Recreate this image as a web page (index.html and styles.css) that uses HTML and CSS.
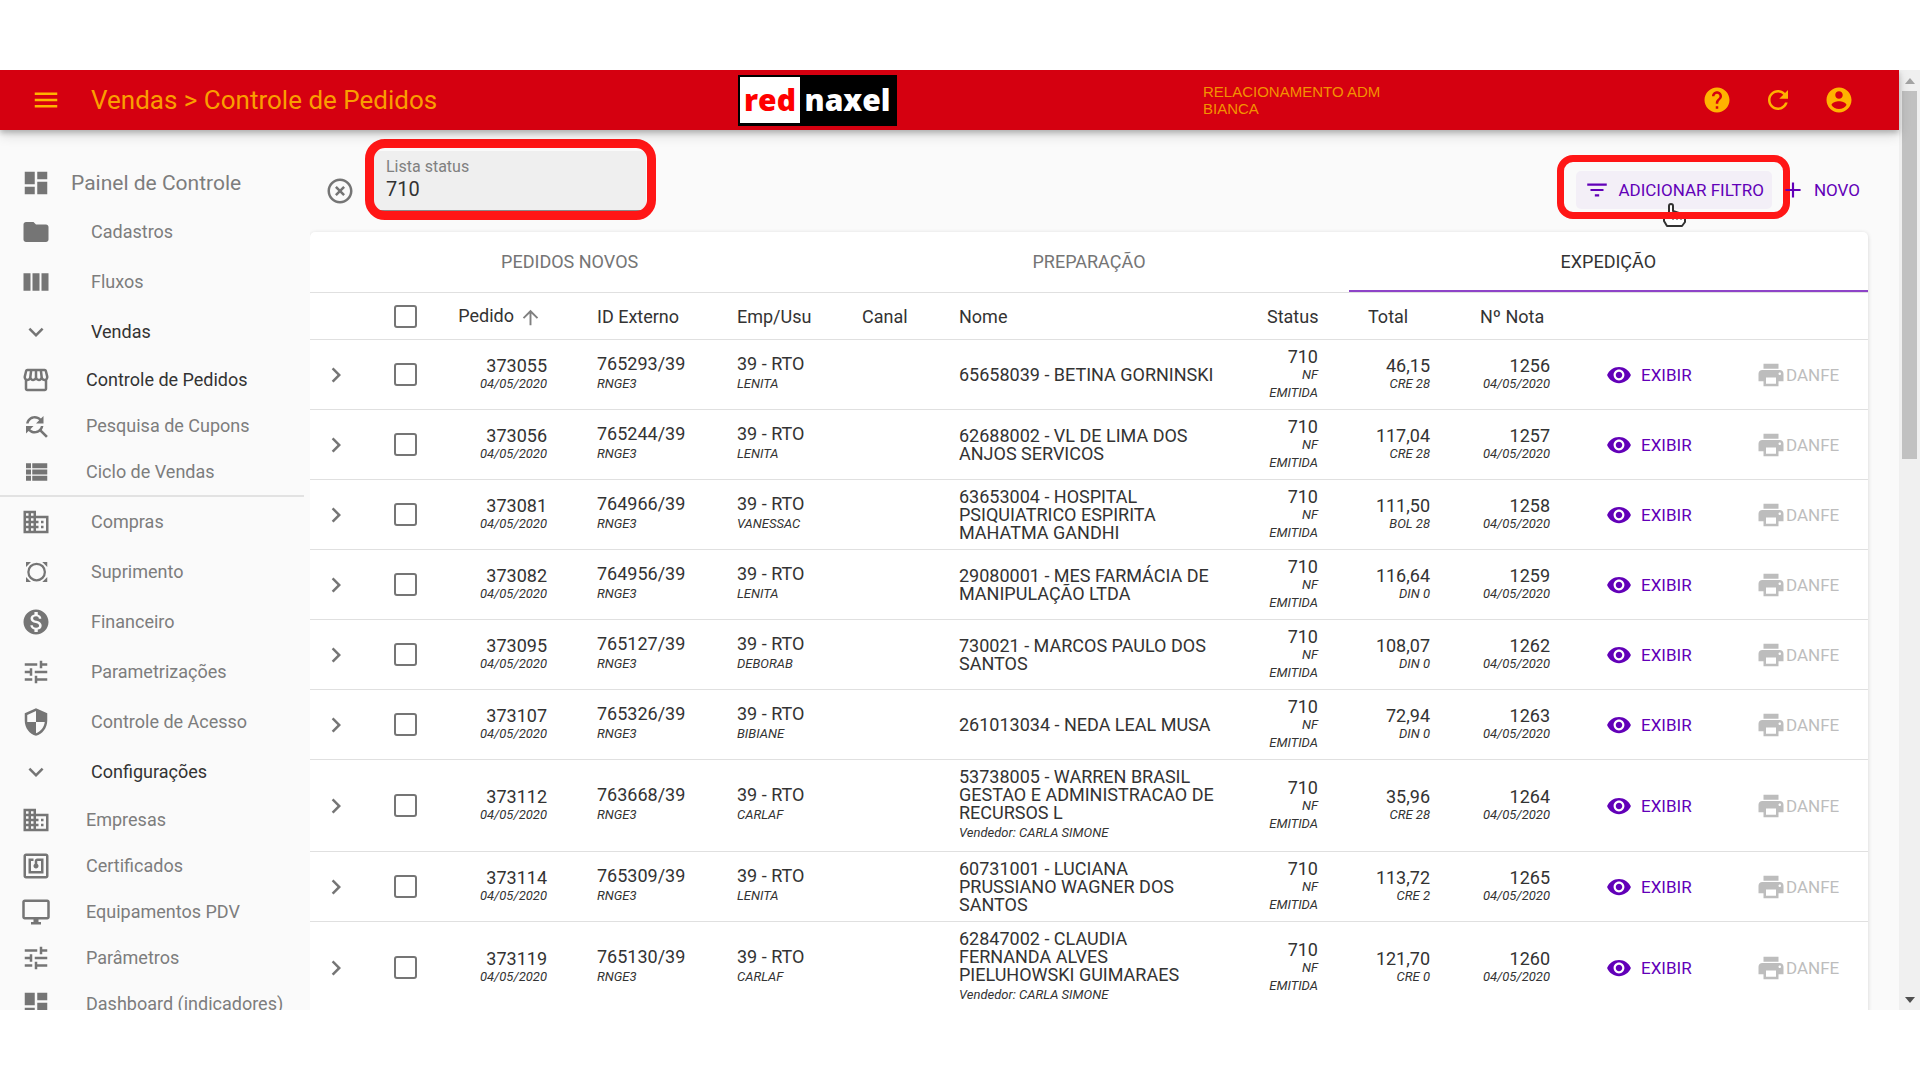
FILE: index.html
```html
<!DOCTYPE html>
<html lang="pt-BR">
<head>
<meta charset="utf-8">
<meta name="viewport" content="width=device-width, initial-scale=1">
<title>Vendas &gt; Controle de Pedidos</title>
<link rel="stylesheet" href="styles.css">
</head>
<body>
<svg class="sprite" aria-hidden="true">
  <symbol id="menu" viewBox="0 0 24 24"><path d="M3 18h18v-2H3v2zm0-5h18v-2H3v2zm0-7v2h18V6H3z"/></symbol>
  <symbol id="help" viewBox="0 0 24 24"><path d="M12 2C6.48 2 2 6.48 2 12s4.48 10 10 10 10-4.48 10-10S17.52 2 12 2zm1 17h-2v-2h2v2zm2.07-7.75l-.9.92C13.45 12.9 13 13.5 13 15h-2v-.5c0-1.1.45-2.1 1.17-2.83l1.24-1.26c.37-.36.59-.86.59-1.41 0-1.1-.9-2-2-2s-2 .9-2 2H8c0-2.21 1.79-4 4-4s4 1.79 4 4c0 .88-.36 1.68-.93 2.25z"/></symbol>
  <symbol id="refresh" viewBox="0 0 24 24"><path d="M17.65 6.35C16.2 4.9 14.21 4 12 4c-4.42 0-7.99 3.58-7.99 8s3.57 8 7.99 8c3.73 0 6.84-2.55 7.73-6h-2.08c-.82 2.33-3.04 4-5.65 4-3.31 0-6-2.69-6-6s2.69-6 6-6c1.66 0 3.14.69 4.22 1.78L13 11h7V4l-2.35 2.35z"/></symbol>
  <symbol id="account" viewBox="0 0 24 24"><path d="M12 2C6.48 2 2 6.48 2 12s4.48 10 10 10 10-4.48 10-10S17.52 2 12 2zm0 3c1.66 0 3 1.34 3 3s-1.34 3-3 3-3-1.34-3-3 1.34-3 3-3zm0 14.2c-2.5 0-4.71-1.28-6-3.22.03-1.99 4-3.08 6-3.08 1.99 0 5.97 1.09 6 3.08-1.29 1.94-3.5 3.22-6 3.22z"/></symbol>
  <symbol id="dashboard" viewBox="0 0 24 24"><path d="M3 13h8V3H3v10zm0 8h8v-6H3v6zm10 0h8V11h-8v10zm0-18v6h8V3h-8z"/></symbol>
  <symbol id="folder" viewBox="0 0 24 24"><path d="M10 4H4c-1.1 0-1.99.9-1.99 2L2 18c0 1.1.9 2 2 2h16c1.1 0 2-.9 2-2V8c0-1.1-.9-2-2-2h-8l-2-2z"/></symbol>
  <symbol id="columns" viewBox="0 0 24 24"><path d="M2 5h5.6v14H2zM9.2 5h5.6v14H9.200zM16.400 5H22v14h-5.600z"/></symbol>
  <symbol id="down" viewBox="0 0 24 24"><path d="M16.590 8.590L12 13.170 7.410 8.590 6 10l6 6 6-6z"/></symbol>
  <symbol id="right" viewBox="0 0 24 24"><path d="M10 6L8.590 7.410 13.170 12l-4.580 4.590L10 18l6-6z"/></symbol>
  <symbol id="store" viewBox="0 0 24 24"><path d="M21.900 8.890l-1.050-4.370c-.22-.9-1-1.520-1.910-1.520H5.050c-.9 0-1.690.63-1.900 1.520L2.100 8.890c-.24 1.020-.02 2.060.62 2.880.08.11.19.19.28.29V19c0 1.100.9 2 2 2h14c1.100 0 2-.9 2-2v-6.940c.09-.09.2-.18.28-.28.64-.82.87-1.870.62-2.890zm-2.990-3.900l1.050 4.370c.1.42.01.84-.25 1.170-.14.18-.44.47-.94.47-.61 0-1.140-.49-1.210-1.140L16.980 5l1.930-.01zM13 5h1.960l.54 4.520c.05.39-.07.78-.33 1.070-.22.26-.54.41-.95.41-.67 0-1.220-.59-1.220-1.310V5zM8.490 9.520L9.040 5H11v4.690c0 .72-.55 1.310-1.290 1.310-.34 0-.65-.15-.89-.41-.25-.29-.37-.68-.33-1.070zm-4.450-.16L5.050 5h1.970l-.58 4.860c-.08.65-.6 1.140-1.210 1.140-.49 0-.8-.29-.93-.47-.27-.32-.36-.75-.26-1.170zM5 19v-6.030c.08.01.15.03.23.03.87 0 1.660-.36 2.240-.95.6.6 1.400.95 2.310.95.87 0 1.650-.36 2.230-.93.59.57 1.390.93 2.290.93.84 0 1.640-.35 2.240-.95.58.59 1.370.95 2.240.95.08 0 .15-.02.23-.03V19H5z"/></symbol>
  <symbol id="search" viewBox="0 0 24 24"><path d="M11 6c1.380 0 2.630.56 3.540 1.460L12 10h6V4l-2.050 2.050C14.680 4.780 12.930 4 11 4c-3.530 0-6.430 2.610-6.920 6H6.100c.46-2.280 2.480-4 4.900-4zm5.640 9.140c.66-.9 1.120-1.970 1.280-3.140H15.900c-.46 2.280-2.480 4-4.900 4-1.380 0-2.630-.56-3.540-1.460L10 12H4v6l2.050-2.050C7.320 17.220 9.070 18 11 18c1.550 0 2.980-.51 4.140-1.360L20 21.490 21.490 20l-4.850-4.860z"/></symbol>
  <symbol id="list" viewBox="0 0 24 24"><path d="M4 14h4v-4H4v4zm0 5h4v-4H4v4zM4 9h4V5H4v4zm5 5h12v-4H9v4zm0 5h12v-4H9v4zM9 5v4h12V5H9z"/></symbol>
  <symbol id="business" viewBox="0 0 24 24"><path d="M12 7V3H2v18h20V7H12zM6 19H4v-2h2v2zm0-4H4v-2h2v2zm0-4H4V9h2v2zm0-4H4V5h2v2zm4 12H8v-2h2v2zm0-4H8v-2h2v2zm0-4H8V9h2v2zm0-4H8V5h2v2zm10 12h-8v-2h2v-2h-2v-2h2v-2h-2V9h8v10zm-2-8h-2v2h2v-2zm0 4h-2v2h2v-2z"/></symbol>
  <symbol id="supply" viewBox="0 0 24 24"><circle cx="12.500" cy="12" r="6.600" fill="none" stroke="currentColor" stroke-width="1.800"/><path d="M4 4h4L4 8zM21 4v4l-4-4zM4 20v-4l4 4zM21 20h-4l4-4z"/></symbol>
  <symbol id="money" viewBox="0 0 24 24"><path d="M12 2C6.480 2 2 6.480 2 12s4.480 10 10 10 10-4.480 10-10S17.520 2 12 2zm1.410 16.090V20h-2.670v-1.930c-1.710-.36-3.160-1.460-3.270-3.400h1.960c.1 1.050.82 1.870 2.650 1.870 1.960 0 2.400-.98 2.400-1.590 0-.83-.44-1.610-2.670-2.140-2.480-.6-4.180-1.620-4.180-3.670 0-1.720 1.390-2.840 3.110-3.210V4h2.670v1.950c1.860.45 2.790 1.860 2.850 3.390H14.300c-.05-1.110-.64-1.870-2.220-1.870-1.500 0-2.400.68-2.400 1.640 0 .84.65 1.390 2.670 1.910s4.180 1.390 4.180 3.910c-.01 1.830-1.380 2.830-3.120 3.160z"/></symbol>
  <symbol id="tune" viewBox="0 0 24 24"><path d="M3 17v2h6v-2H3zM3 5v2h10V5H3zm10 16v-2h8v-2h-8v-2h-2v6h2zM7 9v2H3v2h4v2h2V9H7zm14 4v-2H11v2h10zm-6-4h2V7h4V5h-4V3h-2v6z"/></symbol>
  <symbol id="shield" viewBox="0 0 24 24"><path d="M12 1L3 5v6c0 5.550 3.840 10.740 9 12 5.160-1.260 9-6.450 9-12V5l-9-4zm0 10.990h7c-.53 4.120-3.280 7.790-7 8.940V12H5V6.300l7-3.110v8.800z"/></symbol>
  <symbol id="nfc" viewBox="0 0 24 24"><path d="M20 2H4c-1.100 0-2 .9-2 2v16c0 1.100.9 2 2 2h16c1.100 0 2-.9 2-2V4c0-1.100-.9-2-2-2zm0 18H4V4h16v16zM18 6h-5c-1.100 0-2 .9-2 2v2.280c-.6.35-1 .98-1 1.720 0 1.100.9 2 2 2s2-.9 2-2c0-.74-.4-1.380-1-1.720V8h3v8H8V8h2V6H6v12h12V6z"/></symbol>
  <symbol id="desktop" viewBox="0 0 24 24"><path d="M21 2H3c-1.100 0-2 .9-2 2v12c0 1.100.9 2 2 2h7v2H8v2h8v-2h-2v-2h7c1.100 0 2-.9 2-2V4c0-1.100-.9-2-2-2zm0 14H3V4h18v12z"/></symbol>
  <symbol id="clear" viewBox="0 0 24 24"><path d="M14.590 8L12 10.590 9.410 8 8 9.410 10.590 12 8 14.590 9.410 16 12 13.410 14.590 16 16 14.590 13.410 12 16 9.410 14.590 8zM12 2C6.470 2 2 6.470 2 12s4.470 10 10 10 10-4.470 10-10S17.530 2 12 2zm0 18c-4.410 0-8-3.590-8-8s3.590-8 8-8 8 3.590 8 8-3.590 8-8 8z"/></symbol>
  <symbol id="filter" viewBox="0 0 24 24"><path d="M10 18h4v-2h-4v2zM3 6v2h18V6H3zm3 7h12v-2H6v2z"/></symbol>
  <symbol id="add" viewBox="0 0 24 24"><path d="M19 13h-6v6h-2v-6H5v-2h6V5h2v6h6v2z"/></symbol>
  <symbol id="up" viewBox="0 0 24 24"><path d="M4 12l1.410 1.410L11 7.830V20h2V7.830l5.580 5.590L20 12l-8-8-8 8z"/></symbol>
  <symbol id="eye" viewBox="0 0 24 24"><path d="M12 4.500C7 4.500 2.730 7.610 1 12c1.730 4.390 6 7.500 11 7.500s9.270-3.110 11-7.500c-1.730-4.390-6-7.500-11-7.500zM12 17c-2.760 0-5-2.240-5-5s2.240-5 5-5 5 2.240 5 5-2.240 5-5 5zm0-8c-1.660 0-3 1.340-3 3s1.340 3 3 3 3-1.340 3-3-1.340-3-3-3z"/></symbol>
  <symbol id="print" viewBox="0 0 24 24"><path d="M19 8H5c-1.660 0-3 1.340-3 3v6h4v4h12v-4h4v-6c0-1.660-1.340-3-3-3zm-3 11H8v-5h8v5zm3-7c-.55 0-1-.45-1-1s.45-1 1-1 1 .45 1 1-.45 1-1 1zm-1-9H6v4h12V3z"/></symbol>
</svg>

<div class="app">
  <header class="topbar">
    <button class="icon-button" aria-label="Menu"><svg class="icon"><use href="#menu"/></svg></button>
    <h1 class="title">Vendas &gt; Controle de Pedidos</h1>
    <a class="logo" href="#"><span class="logo-red">red</span><span class="logo-naxel">naxel</span></a>
    <p class="user">RELACIONAMENTO ADM<br>BIANCA</p>
    <div class="top-actions">
      <button class="icon-button" aria-label="Ajuda"><svg class="icon"><use href="#help"/></svg></button>
      <button class="icon-button" aria-label="Atualizar"><svg class="icon"><use href="#refresh"/></svg></button>
      <button class="icon-button" aria-label="Conta"><svg class="icon"><use href="#account"/></svg></button>
    </div>
  </header>

  <nav class="sidebar" aria-label="Principal">
    <a class="item home" href="#"><svg class="icon"><use href="#dashboard"/></svg>Painel de Controle</a>
    <a class="item" href="#"><svg class="icon"><use href="#folder"/></svg>Cadastros</a>
    <a class="item" href="#"><svg class="icon"><use href="#columns"/></svg>Fluxos</a>
    <a class="item open" href="#"><svg class="icon"><use href="#down"/></svg>Vendas</a>
    <div class="submenu divided">
      <a class="item open" href="#"><svg class="icon"><use href="#store"/></svg>Controle de Pedidos</a>
      <a class="item" href="#"><svg class="icon"><use href="#search"/></svg>Pesquisa de Cupons</a>
      <a class="item" href="#"><svg class="icon"><use href="#list"/></svg>Ciclo de Vendas</a>
    </div>
    <a class="item" href="#"><svg class="icon"><use href="#business"/></svg>Compras</a>
    <a class="item" href="#"><svg class="icon"><use href="#supply"/></svg>Suprimento</a>
    <a class="item" href="#"><svg class="icon"><use href="#money"/></svg>Financeiro</a>
    <a class="item" href="#"><svg class="icon"><use href="#tune"/></svg>Parametrizações</a>
    <a class="item" href="#"><svg class="icon"><use href="#shield"/></svg>Controle de Acesso</a>
    <a class="item open" href="#"><svg class="icon"><use href="#down"/></svg>Configurações</a>
    <div class="submenu">
      <a class="item" href="#"><svg class="icon"><use href="#business"/></svg>Empresas</a>
      <a class="item" href="#"><svg class="icon"><use href="#nfc"/></svg>Certificados</a>
      <a class="item" href="#"><svg class="icon"><use href="#desktop"/></svg>Equipamentos PDV</a>
      <a class="item" href="#"><svg class="icon"><use href="#tune"/></svg>Parâmetros</a>
      <a class="item" href="#"><svg class="icon"><use href="#dashboard"/></svg>Dashboard (indicadores)</a>
    </div>
  </nav>

  <main class="content">
    <div class="toolbar">
      <button class="clear" aria-label="Remover filtro"><svg class="icon"><use href="#clear"/></svg></button>
      <div class="field">
        <label for="status">Lista status</label>
        <input id="status" type="text" value="710">
        <span class="mark mark-field"></span>
      </div>
      <div class="actions">
        <button class="action hovered"><svg class="icon small"><use href="#filter"/></svg>ADICIONAR FILTRO
          <svg class="cursor" viewBox="0 0 24 24"><path d="M6 14V3a2 2 0 0 1 4 0v5l3 1 3 1 4 1q2 1 2 3v5l-3 4H4l-3-5v-5z" fill="#fff" stroke="#333" stroke-width="2" stroke-linejoin="round"/><path d="M10 14v3m4-3v3m4-3v3" stroke="#333"/></svg>
          <span class="mark mark-button"></span>
        </button>
        <button class="action"><svg class="icon small"><use href="#add"/></svg>NOVO</button>
      </div>
    </div>

    <section class="panel">
      <div class="tabs" role="tablist">
        <button class="tab" role="tab">PEDIDOS NOVOS</button>
        <button class="tab" role="tab">PREPARAÇÃO</button>
        <button class="tab selected" role="tab" aria-selected="true">EXPEDIÇÃO</button>
      </div>
      <table class="orders">
        <colgroup>
          <col class="c-expand"><col class="c-check"><col class="c-order"><col class="c-order"><col class="c-user"><col class="c-channel"><col><col class="c-status"><col class="c-total"><col class="c-invoice"><col class="c-show"><col class="c-danfe">
        </colgroup>
        <thead>
          <tr><th></th><th class="check"><input type="checkbox" aria-label="Selecionar todos"></th><th class="num">Pedido<svg class="icon sort"><use href="#up"/></svg></th><th>ID Externo</th><th>Emp/Usu</th><th>Canal</th><th>Nome</th><th class="num">Status</th><th>Total</th><th>Nº Nota</th><th></th><th></th></tr>
        </thead>
        <tbody>
          <tr><td class="expand"><button aria-label="Expandir"><svg class="icon"><use href="#right"/></svg></button></td><td class="check"><input type="checkbox" aria-label="Selecionar 373055"></td><td class="num">373055<small>04/05/2020</small></td><td class="wide">765293/39<small>RNGE3</small></td><td class="wide">39 - RTO<small>LENITA</small></td><td></td><td>65658039 - BETINA GORNINSKI</td><td class="num">710<small>NF EMITIDA</small></td><td class="num">46,15<small>CRE 28</small></td><td class="num">1256<small>04/05/2020</small></td><td class="show"><button class="action"><svg class="icon small"><use href="#eye"/></svg>EXIBIR</button></td><td class="danfe"><button class="action" disabled><svg class="icon"><use href="#print"/></svg>DANFE</button></td></tr>
          <tr><td class="expand"><button aria-label="Expandir"><svg class="icon"><use href="#right"/></svg></button></td><td class="check"><input type="checkbox" aria-label="Selecionar 373056"></td><td class="num">373056<small>04/05/2020</small></td><td class="wide">765244/39<small>RNGE3</small></td><td class="wide">39 - RTO<small>LENITA</small></td><td></td><td>62688002 - VL DE LIMA DOS ANJOS SERVICOS</td><td class="num">710<small>NF EMITIDA</small></td><td class="num">117,04<small>CRE 28</small></td><td class="num">1257<small>04/05/2020</small></td><td class="show"><button class="action"><svg class="icon small"><use href="#eye"/></svg>EXIBIR</button></td><td class="danfe"><button class="action" disabled><svg class="icon"><use href="#print"/></svg>DANFE</button></td></tr>
          <tr><td class="expand"><button aria-label="Expandir"><svg class="icon"><use href="#right"/></svg></button></td><td class="check"><input type="checkbox" aria-label="Selecionar 373081"></td><td class="num">373081<small>04/05/2020</small></td><td class="wide">764966/39<small>RNGE3</small></td><td class="wide">39 - RTO<small>VANESSAC</small></td><td></td><td>63653004 - HOSPITAL PSIQUIATRICO ESPIRITA MAHATMA GANDHI</td><td class="num">710<small>NF EMITIDA</small></td><td class="num">111,50<small>BOL 28</small></td><td class="num">1258<small>04/05/2020</small></td><td class="show"><button class="action"><svg class="icon small"><use href="#eye"/></svg>EXIBIR</button></td><td class="danfe"><button class="action" disabled><svg class="icon"><use href="#print"/></svg>DANFE</button></td></tr>
          <tr><td class="expand"><button aria-label="Expandir"><svg class="icon"><use href="#right"/></svg></button></td><td class="check"><input type="checkbox" aria-label="Selecionar 373082"></td><td class="num">373082<small>04/05/2020</small></td><td class="wide">764956/39<small>RNGE3</small></td><td class="wide">39 - RTO<small>LENITA</small></td><td></td><td>29080001 - MES FARMÁCIA DE MANIPULAÇÃO LTDA</td><td class="num">710<small>NF EMITIDA</small></td><td class="num">116,64<small>DIN 0</small></td><td class="num">1259<small>04/05/2020</small></td><td class="show"><button class="action"><svg class="icon small"><use href="#eye"/></svg>EXIBIR</button></td><td class="danfe"><button class="action" disabled><svg class="icon"><use href="#print"/></svg>DANFE</button></td></tr>
          <tr><td class="expand"><button aria-label="Expandir"><svg class="icon"><use href="#right"/></svg></button></td><td class="check"><input type="checkbox" aria-label="Selecionar 373095"></td><td class="num">373095<small>04/05/2020</small></td><td class="wide">765127/39<small>RNGE3</small></td><td class="wide">39 - RTO<small>DEBORAB</small></td><td></td><td>730021 - MARCOS PAULO DOS SANTOS</td><td class="num">710<small>NF EMITIDA</small></td><td class="num">108,07<small>DIN 0</small></td><td class="num">1262<small>04/05/2020</small></td><td class="show"><button class="action"><svg class="icon small"><use href="#eye"/></svg>EXIBIR</button></td><td class="danfe"><button class="action" disabled><svg class="icon"><use href="#print"/></svg>DANFE</button></td></tr>
          <tr><td class="expand"><button aria-label="Expandir"><svg class="icon"><use href="#right"/></svg></button></td><td class="check"><input type="checkbox" aria-label="Selecionar 373107"></td><td class="num">373107<small>04/05/2020</small></td><td class="wide">765326/39<small>RNGE3</small></td><td class="wide">39 - RTO<small>BIBIANE</small></td><td></td><td>261013034 - NEDA LEAL MUSA</td><td class="num">710<small>NF EMITIDA</small></td><td class="num">72,94<small>DIN 0</small></td><td class="num">1263<small>04/05/2020</small></td><td class="show"><button class="action"><svg class="icon small"><use href="#eye"/></svg>EXIBIR</button></td><td class="danfe"><button class="action" disabled><svg class="icon"><use href="#print"/></svg>DANFE</button></td></tr>
          <tr><td class="expand"><button aria-label="Expandir"><svg class="icon"><use href="#right"/></svg></button></td><td class="check"><input type="checkbox" aria-label="Selecionar 373112"></td><td class="num">373112<small>04/05/2020</small></td><td class="wide">763668/39<small>RNGE3</small></td><td class="wide">39 - RTO<small>CARLAF</small></td><td></td><td class="wide">53738005 - WARREN BRASIL GESTAO E ADMINISTRACAO DE RECURSOS L<small>Vendedor: CARLA SIMONE</small></td><td class="num">710<small>NF EMITIDA</small></td><td class="num">35,96<small>CRE 28</small></td><td class="num">1264<small>04/05/2020</small></td><td class="show"><button class="action"><svg class="icon small"><use href="#eye"/></svg>EXIBIR</button></td><td class="danfe"><button class="action" disabled><svg class="icon"><use href="#print"/></svg>DANFE</button></td></tr>
          <tr><td class="expand"><button aria-label="Expandir"><svg class="icon"><use href="#right"/></svg></button></td><td class="check"><input type="checkbox" aria-label="Selecionar 373114"></td><td class="num">373114<small>04/05/2020</small></td><td class="wide">765309/39<small>RNGE3</small></td><td class="wide">39 - RTO<small>LENITA</small></td><td></td><td>60731001 - LUCIANA PRUSSIANO WAGNER DOS SANTOS</td><td class="num">710<small>NF EMITIDA</small></td><td class="num">113,72<small>CRE 2</small></td><td class="num">1265<small>04/05/2020</small></td><td class="show"><button class="action"><svg class="icon small"><use href="#eye"/></svg>EXIBIR</button></td><td class="danfe"><button class="action" disabled><svg class="icon"><use href="#print"/></svg>DANFE</button></td></tr>
          <tr><td class="expand"><button aria-label="Expandir"><svg class="icon"><use href="#right"/></svg></button></td><td class="check"><input type="checkbox" aria-label="Selecionar 373119"></td><td class="num">373119<small>04/05/2020</small></td><td class="wide">765130/39<small>RNGE3</small></td><td class="wide">39 - RTO<small>CARLAF</small></td><td></td><td class="wide">62847002 - CLAUDIA FERNANDA ALVES PIELUHOWSKI GUIMARAES<small>Vendedor: CARLA SIMONE</small></td><td class="num">710<small>NF EMITIDA</small></td><td class="num">121,70<small>CRE 0</small></td><td class="num">1260<small>04/05/2020</small></td><td class="show"><button class="action"><svg class="icon small"><use href="#eye"/></svg>EXIBIR</button></td><td class="danfe"><button class="action" disabled><svg class="icon"><use href="#print"/></svg>DANFE</button></td></tr>
        </tbody>
      </table>
    </section>
  </main>

  <div class="scrollbar" aria-hidden="true">
    <span class="arrow arrow-up"></span>
    <span class="track"><span class="thumb"></span></span>
    <span class="arrow arrow-down"></span>
  </div>
</div>
</body>
</html>
```
FILE: styles.css
```css
*, *::before, *::after { box-sizing: border-box; }
body {
  margin: 0;
  padding: 70px 0;
  background: #fff;
  color: #333;
  font: 18px/18px Roboto, "Liberation Sans", sans-serif;
}
button { padding: 0; border: 0; background: none; color: inherit; font: inherit; cursor: pointer; }
a { color: inherit; text-decoration: none; }
.sprite { display: none; }
.icon { width: 30px; height: 30px; flex: none; fill: currentColor; }
.icon.small { width: 26px; height: 26px; }

.app {
  display: grid;
  grid-template: 60px minmax(0, 1fr) / 310px minmax(0, 1fr) 21px;
  height: calc(100vh - 140px);
  overflow: hidden;
  background: #fafafa;
}

/* Top bar */
.topbar {
  grid-column: 1 / 3;
  display: grid;
  grid-template-columns: 61px 647px 465px 1fr auto;
  align-items: center;
  padding: 0 30px 0 15px;
  background: #d50010;
  color: #ffb300;
  box-shadow: 0 3px 5px rgba(0, 0, 0, .2), 0 5px 12px rgba(0, 0, 0, .14);
  z-index: 1;
}
.icon-button { display: grid; place-items: center; width: 61px; height: 60px; }
.title { margin: 0 0 0 15px; font-size: 26px; font-weight: 400; line-height: 32px; color: #fa9e00; }
.logo {
  display: flex;
  align-items: center;
  justify-self: start;
  margin-left: 15px;
  height: 51px;
  width: 159px;
  padding: 2px;
  background: #000;
  font-family: "Open Sans", Roboto, sans-serif;
  font-weight: 800;
  font-size: 30px;
  line-height: 46px;
}
.logo-red { width: 60px; background: #fff; color: #f00; text-align: center; }
.logo-naxel { flex: 1; color: #fff; text-align: center; }
.user { margin: 0 0 0 15px; font: 15px/17px "Liberation Sans", sans-serif; color: #f39200; }
.top-actions { display: flex; }

/* Sidebar */
.sidebar { padding-top: 29px; overflow: hidden; color: #7d7d7d; }
.item { display: flex; align-items: center; gap: 40px; height: 50px; padding-left: 21px; white-space: nowrap; }
.item .icon { color: #757575; }
.item.home { gap: 20px; height: 48px; font-size: 21px; }
.item.open { color: #333; }
.submenu .item { gap: 35px; height: 46px; }
.divided { margin-right: 6px; border-bottom: 2px solid #e2e2e2; }

/* Filters */
.content { display: flex; flex-direction: column; padding-right: 31px; overflow: hidden; }
.toolbar { display: flex; align-items: flex-end; flex: none; height: 102px; padding: 0 0 21px 15px; }
.clear { height: 40px; margin-right: 18px; color: #757575; }
.clear .icon { display: block; }
.field {
  position: relative;
  display: flex;
  flex-direction: column;
  width: 273px;
  height: 60px;
  padding: 8px 13px;
  background: #efefef;
  border-bottom: 1px solid #888;
  border-radius: 5px 5px 0 0;
}
.field label { font-size: 16px; line-height: 16px; color: #808080; }
.field input { padding: 0; border: 0; outline: 0; background: none; color: #333; font: 20px/28px Roboto, sans-serif; }
.mark { position: absolute; border: solid #ff1616; pointer-events: none; }
.mark-field { inset: -12px -10px -10px -8px; border-width: 9px; border-radius: 20px; }
.mark-button { inset: -16px -18px -10px -19px; border-width: 7px; border-radius: 16px; }
.actions { display: flex; margin-left: auto; }
.action {
  position: relative;
  display: inline-flex;
  align-items: center;
  gap: 9px;
  height: 38px;
  padding: 0 7px;
  border-radius: 5px;
  color: #6200b8;
  font-size: 17px;
}
.toolbar .action { gap: 8px; margin-bottom: 2px; padding: 0 8px; }
.hovered { background: #f3eff7; }
.cursor { position: absolute; top: 32px; left: 87px; width: 24px; height: 24px; }

/* Orders */
.panel { background: #fff; border-radius: 5px 5px 0 0; box-shadow: 0 1px 4px rgba(0, 0, 0, .16); flex: 1 0 auto; }
.tabs { display: grid; grid-template-columns: repeat(3, 1fr); height: 61px; border-bottom: 1px solid #e0e0e0; }
.tab { padding-top: 2px; color: #757575; border-bottom: 2px solid transparent; }
.tab.selected { color: #333; border-color: #8e44c8; }
.orders { width: 100%; table-layout: fixed; border-collapse: separate; border-spacing: 0; }
.c-expand { width: 52px; }
.c-check { width: 75px; }
.c-order { width: 140px; }
.c-user { width: 125px; }
.c-channel { width: 97px; }
.c-status { width: 101px; }
.c-total { width: 112px; }
.c-invoice { width: 120px; }
.c-show { width: 154px; }
.c-danfe { width: 134px; }
.orders th, .orders td { height: 70px; padding: 8px 29px 7px 20px; border-bottom: 1px solid #e0e0e0; text-align: left; font-weight: 400; }
.orders th { height: 47px; padding-top: 2px; padding-bottom: 0; white-space: nowrap; }
.orders .num { text-align: right; padding-right: 30px; }
.orders .expand, .orders .show, .orders .danfe { padding: 0 0 0 11px; }
.orders .show { padding-left: 19px; }
.orders .danfe { padding-left: 15px; }
.orders .check { padding: 0 0 0 32px; }
.expand button, .expand .icon { display: block; color: #757575; }
.orders small { display: block; font-size: 13px; line-height: 18px; font-style: italic; }
.orders .wide small { line-height: 22px; }
.sort { width: 23px; height: 23px; margin: 0 5px; vertical-align: middle; color: #808080; }
.orders input {
  display: block;
  appearance: none;
  width: 23px;
  height: 23px;
  margin: 0;
  border: 2px solid #757575;
  border-radius: 3px;
}
.danfe .action { gap: 0; color: #bdbdbd; }

/* Scrollbar */
.scrollbar { grid-area: 1 / 3 / 3 / 4; display: flex; flex-direction: column; align-items: center; background: #f0f0f0; }
.arrow { width: 21px; height: 21px; display: grid; place-items: center; flex: none; }
.arrow::before { content: ""; border: solid transparent; border-width: 0 5px 6px; border-bottom-color: #a3a3a3; }
.arrow-down::before { border-width: 6px 5px 0; border-top-color: #505050; }
.track { flex: 1; width: 15px; }
.thumb { display: block; height: 41%; background: #c1c1c1; }
```
